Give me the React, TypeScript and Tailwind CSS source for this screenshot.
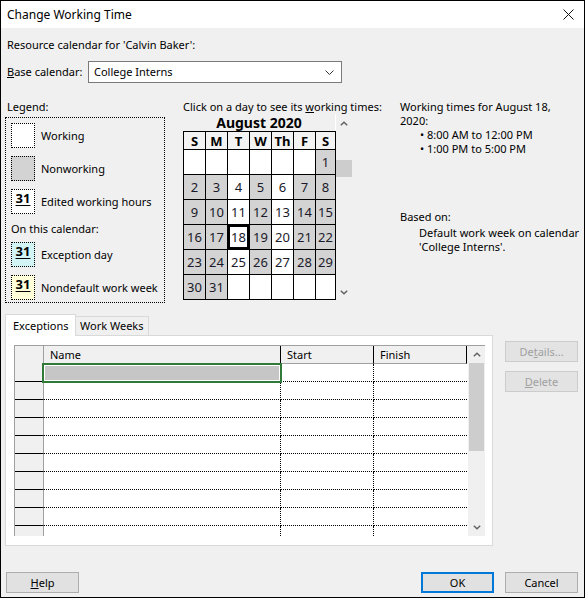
import React from "react";

const days: (number | null)[] = [
  null, null, null, null, null, null, 1,
  2, 3, 4, 5, 6, 7, 8,
  9, 10, 11, 12, 13, 14, 15,
  16, 17, 18, 19, 20, 21, 22,
  23, 24, 25, 26, 27, 28, 29,
  30, 31, null, null, null, null, null,
];

type Kind = "working" | "nonworking" | "edited" | "exception" | "nondefault";

function ChevronUp() {
  return (
    <svg width="8" height="5" viewBox="0 0 8 5">
      <polyline points="0.8,4.3 4,1.2 7.2,4.3" fill="none" stroke="#606060" strokeWidth="1.4" />
    </svg>
  );
}

function ChevronDown() {
  return (
    <svg width="8" height="5" viewBox="0 0 8 5">
      <polyline points="0.8,0.7 4,3.8 7.2,0.7" fill="none" stroke="#606060" strokeWidth="1.4" />
    </svg>
  );
}

function Swatch({ kind }: { kind: Kind }) {
  const bg =
    kind === "nonworking"
      ? "bg-[#d3d3d3]"
      : kind === "exception"
        ? "bg-[#d2f4f4]"
        : kind === "nondefault"
          ? "bg-[#ffffd9]"
          : "bg-white";
  const showNum = kind === "edited" || kind === "exception" || kind === "nondefault";
  return (
    <div className={`w-[24px] h-[25px] shrink-0 border border-dotted border-black flex justify-center ${bg}`}>
      {showNum && (
        <span className="font-bold text-[13px] leading-[17px] underline underline-offset-[2px]">31</span>
      )}
    </div>
  );
}

function LegendRow({ kind, label }: { kind: Kind; label: string }) {
  return (
    <div className="flex items-center h-[25px] whitespace-nowrap">
      <Swatch kind={kind} />
      <span className="ml-[6px]">{label}</span>
    </div>
  );
}

function Calendar() {
  const heads = ["S", "M", "T", "W", "Th", "F", "S"];
  return (
    <div className="flex">
      <div className="flex flex-col shrink-0">
        <div className="h-[17px] flex items-center justify-center font-bold text-[14px] leading-[17px] border-r border-white">
          August 2020
        </div>
        <div className="grid grid-cols-[repeat(6,21px)_19px] grid-rows-[17px_repeat(6,24px)] gap-px bg-black p-px">
          {heads.map((h, i) => (
            <div key={"h" + i} className="bg-[#f3f3f3] flex items-center justify-center font-bold text-[13px]">
              {h}
            </div>
          ))}
          {days.map((d, i) => {
            const dow = i % 7;
            const working = d === null || dow === 2 || dow === 4;
            const sel = d === 18;
            return (
              <div
                key={i}
                className={`flex items-center justify-center text-[13px] text-[#1a1a2a] ${working ? "bg-white" : "bg-[#d3d3d3]"} ${sel ? "border-2 border-black" : ""}`}
              >
                {d}
              </div>
            );
          })}
        </div>
      </div>
      <div className="w-[16px] shrink-0 mt-px flex flex-col items-center">
        <div className="h-[16px] flex items-center justify-center"><ChevronUp /></div>
        <div className="h-[29px]" />
        <div className="w-[16px] h-[17px] bg-[#cdcdcd]" />
        <div className="flex-1" />
        <div className="h-[16px] flex items-center justify-center"><ChevronDown /></div>
      </div>
    </div>
  );
}

function TableRow({ first }: { first?: boolean }) {
  return (
    <div className="flex h-[18px] shrink-0">
      <div className="w-[29px] bg-[#f0f0f0] border-r border-[#a0a0a0] border-b border-b-black" />
      <div className="w-[237px] border-r border-dotted border-black border-b relative">
        {first && (
          <div className="absolute -left-[2px] -top-px w-[240px] h-[20px] border-2 border-[#2f7a36] p-px z-10">
            <div className="w-full h-full bg-[#c6c6c6]" />
          </div>
        )}
      </div>
      <div className="w-[93px] border-r border-dotted border-black border-b" />
      <div className="w-[93px] border-b border-dotted border-black" />
    </div>
  );
}

function Button({ label, u, disabled, primary }: { label: string; u?: number; disabled?: boolean; primary?: boolean }) {
  const cls = disabled
    ? "bg-[#e3e3e3] border border-[#cccccc] text-[#a0a0a0]"
    : primary
      ? "bg-[#e1e1e1] border-2 border-[#0078d7]"
      : "bg-[#e1e1e1] border border-[#adadad]";
  return (
    <div className={`w-[73px] h-[21px] shrink-0 flex items-center justify-center whitespace-nowrap ${cls}`}>
      {u === undefined ? (
        <span>{label}</span>
      ) : (
        <span>
          {label.slice(0, u)}
          <span className="underline">{label.slice(u, u + 1)}</span>
          {label.slice(u + 1)}
        </span>
      )}
    </div>
  );
}

export default function App() {
  return (
    <div className="w-[585px] h-[598px] border border-black bg-[#f0f0f0] flex flex-col font-['Noto_Sans',sans-serif] text-[11px] leading-[16px] text-black overflow-hidden">
      {/* title bar */}
      <div className="h-[27px] bg-white flex items-center justify-between pl-[6px] pr-[10px] shrink-0">
        <span className="text-[12px]">Change Working Time</span>
        <svg width="11" height="11" viewBox="0 0 11 11">
          <line x1="0.5" y1="0.5" x2="10.5" y2="10.5" stroke="#111" strokeWidth="1" />
          <line x1="10.5" y1="0.5" x2="0.5" y2="10.5" stroke="#111" strokeWidth="1" />
        </svg>
      </div>

      <div className="flex flex-col pl-[4px] pr-[6px]">
        <div className="mt-[9px] h-[16px] ml-[2px] whitespace-nowrap">Resource calendar for 'Calvin Baker':</div>

        <div className="mt-[8px] h-[22px] flex items-center">
          <span className="ml-[2px] w-[81px] shrink-0 whitespace-nowrap">
            <span className="underline">B</span>ase calendar:
          </span>
          <div className="w-[254px] h-[22px] shrink-0 bg-white border border-[#7a7a7a] flex items-center justify-between pl-[5px] pr-[7px]">
            <span>College Interns</span>
            <svg width="9" height="5" viewBox="0 0 9 5">
              <polyline points="0.5,0.5 4.5,4.5 8.5,0.5" fill="none" stroke="#333" strokeWidth="1" />
            </svg>
          </div>
        </div>

        {/* main section */}
        <div className="mt-[16px] flex">
          <div className="w-[160px] shrink-0 flex flex-col">
            <div className="h-[16px] ml-[2px]">Legend:</div>
            <div className="mt-[2px] h-[186px] border border-dotted border-black pl-[5px] pt-[5px] flex flex-col">
              <div className="flex flex-col gap-[8px]">
                <LegendRow kind="working" label="Working" />
                <LegendRow kind="nonworking" label="Nonworking" />
                <LegendRow kind="edited" label="Edited working hours" />
              </div>
              <div className="mt-[7px] h-[16px] whitespace-nowrap">On this calendar:</div>
              <div className="mt-[5px] flex flex-col gap-[8px]">
                <LegendRow kind="exception" label="Exception day" />
                <LegendRow kind="nondefault" label="Nondefault work week" />
              </div>
            </div>
          </div>

          <div className="ml-[18px] w-[170px] shrink-0 flex flex-col">
            <div className="h-[16px] whitespace-nowrap">
              Click on a day to see its <span className="underline">w</span>orking times:
            </div>
            <div className="-mt-[1px]">
              <Calendar />
            </div>
          </div>

          <div className="ml-[47px] flex flex-col pt-px whitespace-nowrap">
            <div className="leading-[14px]">Working times for August 18,</div>
            <div className="leading-[14px]">2020:</div>
            <div className="ml-[20px] leading-[14px]">
              <div>• 8:00 AM to 12:00 PM</div>
              <div>• 1:00 PM to 5:00 PM</div>
            </div>
            <div className="mt-[54px] leading-[14px]">Based on:</div>
            <div className="mt-[2px] ml-[19px] leading-[14px]">
              <div>Default work week on calendar</div>
              <div>'College Interns'.</div>
            </div>
          </div>
        </div>

        {/* tabs + table */}
        <div className="mt-[10px] flex">
          <div className="flex flex-col w-[488px] shrink-0">
            <div className="flex items-end h-[22px] whitespace-nowrap">
              <div className="w-[71px] h-[22px] bg-white border border-b-0 border-[#d9d9d9] flex items-center pl-[7px] relative z-10 -mb-px">
                Exceptions
              </div>
              <div className="w-[73px] h-[19px] bg-[#f0f0f0] border border-l-0 border-b-0 border-[#d9d9d9] flex items-center pl-[4px]">
                Work Weeks
              </div>
            </div>
            <div className="h-[211px] bg-white border border-[#d9d9d9] pl-[8px] pt-[9px]">
              <div className="flex h-[191px] w-[471px] border-l border-t border-[#a0a0a0] overflow-hidden">
                <div className="flex flex-col w-[453px]">
                  <div className="flex h-[18px] shrink-0 bg-[#f0f0f0]">
                    <div className="w-[29px] border-r border-[#a0a0a0]" />
                    <div className="w-[237px] border-r border-black border-b border-b-[#a0a0a0] pl-[6px] flex items-center">Name</div>
                    <div className="w-[93px] border-r border-black border-b border-b-[#a0a0a0] pl-[6px] flex items-center">Start</div>
                    <div className="w-[93px] border-r border-black border-b border-b-[#a0a0a0] pl-[6px] flex items-center">Finish</div>
                  </div>
                  {Array.from({ length: 10 }).map((_, i) => (
                    <TableRow key={i} first={i === 0} />
                  ))}
                </div>
                <div className="w-[17px] bg-[#f0f0f0] flex flex-col items-center">
                  <div className="h-[17px] flex items-center justify-center"><ChevronUp /></div>
                  <div className="w-[15px] h-[88px] bg-[#cdcdcd]" />
                  <div className="flex-1" />
                  <div className="h-[18px] flex items-center justify-center"><ChevronDown /></div>
                </div>
              </div>
            </div>
          </div>
          <div className="ml-[12px] mt-[28px] flex flex-col gap-[9px]">
            <Button label="Details..." u={2} disabled />
            <Button label="Delete" u={0} disabled />
          </div>
        </div>

        {/* bottom buttons */}
        <div className="mt-[26px] flex items-center">
          <div className="ml-[1px]">
            <Button label="Help" u={0} />
          </div>
          <div className="flex-1" />
          <Button label="OK" primary />
          <div className="ml-[11px]">
            <Button label="Cancel" />
          </div>
        </div>
      </div>
    </div>
  );
}
